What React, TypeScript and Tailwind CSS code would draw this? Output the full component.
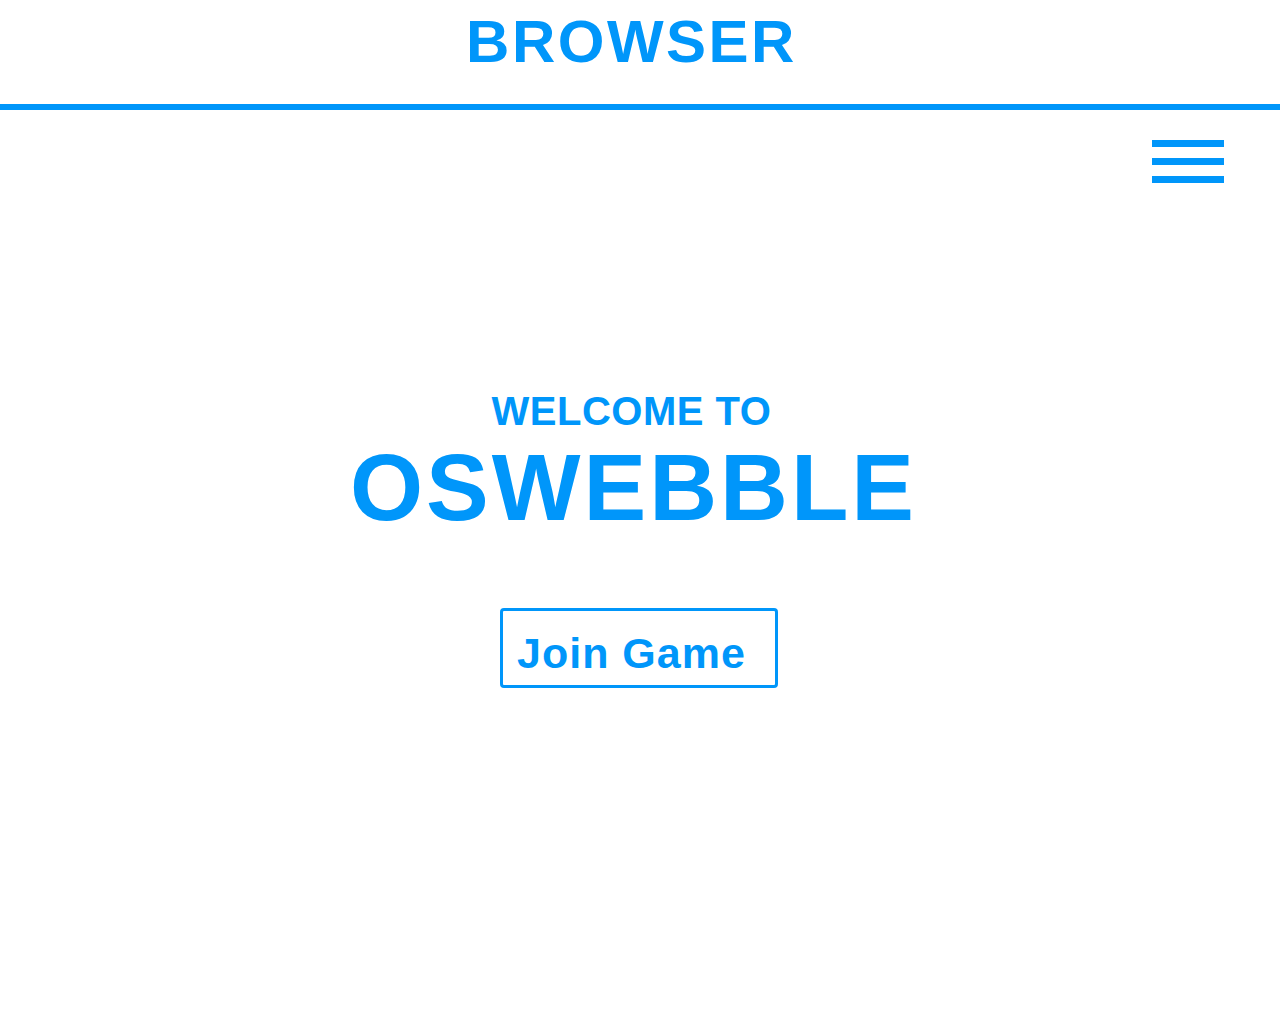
export default function App() {
  const font = { fontFamily: '"Liberation Sans", Arial, Helvetica, sans-serif' };
  return (
    <div className="w-[1280px] h-[1024px] bg-white text-[#0096fa] font-bold overflow-hidden" style={font}>
      <header className="w-[1263px] h-[104px] pt-[12px] flex justify-center">
        <h1 className="text-[60px] leading-none tracking-[2.5px] font-bold">BROWSER</h1>
      </header>
      <div className="w-[1280px] h-[6px] bg-[#0096fa]" />
      <div className="w-[1280px] flex justify-end pr-[56px] pt-[30px]">
        <button className="flex flex-col gap-[11px]" aria-label="menu">
          <span className="block w-[72px] h-[7px] bg-[#0096fa]" />
          <span className="block w-[72px] h-[7px] bg-[#0096fa]" />
          <span className="block w-[72px] h-[7px] bg-[#0096fa]" />
        </button>
      </div>
      <main className="w-[1263px] flex flex-col items-center pt-[208px]">
        <p className="text-[40px] leading-none tracking-[0.5px]">WELCOME TO</p>
        <h2 className="mt-[10px] ml-[4px] text-[94px] leading-none tracking-[3px]">OSWEBBLE</h2>
        <button className="mt-[73px] ml-[15px] w-[278px] h-[80px] border-[3px] border-[#0096fa] rounded-[4px] pl-[14px] pt-[10px] text-left">
          <span className="block text-[43px] leading-none tracking-[1px]">Join Game</span>
        </button>
      </main>
    </div>
  );
}
